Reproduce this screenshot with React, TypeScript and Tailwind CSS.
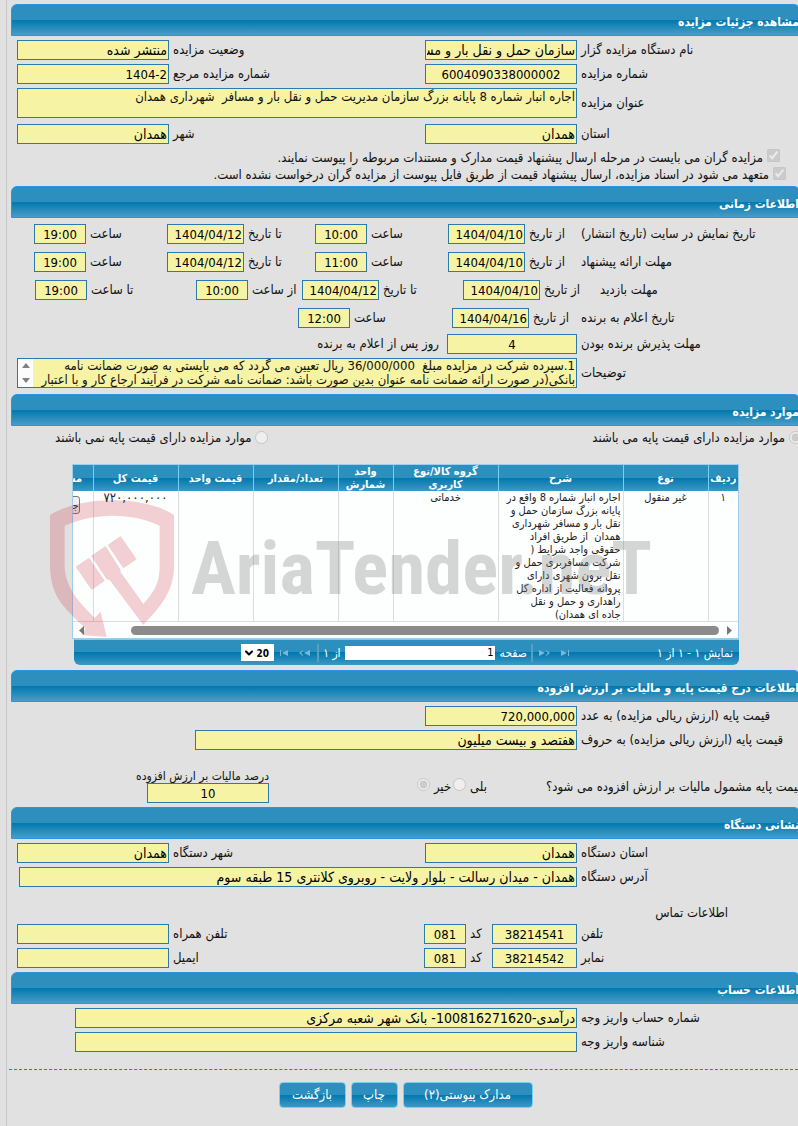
import React from 'react';
import { ChevronDown } from 'lucide-react';

const LABEL = 'shrink-0 whitespace-nowrap text-left pl-1 text-[13px] leading-[20px]';
const FIELD = 'h-5 shrink-0 border border-[#2a7aab] bg-[#f6f3a5] px-px leading-[18px] text-black outline-none';

interface FieldProps {
    label: string;
    value: string;
    labelClass?: string;
    inputClass?: string;
}

const Field: React.FC<FieldProps> = ({ label, value, labelClass = 'w-[221px]', inputClass = 'w-[152px]' }) => {
    const id = React.useId();
    const isNumeric = /^[\d/:,-]*$/.test(value);
    return (
        <>
            <label htmlFor={id} className={`${LABEL} ${labelClass}`}>
                {label}
            </label>
            <input
                id={id}
                readOnly
                value={value}
                className={`${FIELD} ${isNumeric ? 'text-[13px]' : 'text-[14px]'} ${inputClass}`}
            />
        </>
    );
};

const SectionHeader: React.FC<{ title: string }> = ({ title }) => (
    <div className="-mr-[2px] flex h-8 items-center rounded-t-md border border-[#2b93e2] bg-[linear-gradient(to_bottom,#2d8fbe_50%,#0078ae_50%,#4a9dc6)]">
        <h2 className="whitespace-nowrap pt-1 text-[12px] font-bold leading-4 text-white">{title}</h2>
    </div>
);

const Row: React.FC<{ className?: string; children: React.ReactNode }> = ({ className = '', children }) => (
    <div className={`flex items-center ${className}`}>{children}</div>
);

const DATE = 'w-[77px]';
const TIME = 'w-[52px] text-center';

const scheduleRows = [
    {
        title: 'تاریخ نمایش در سایت (تاریخ انتشار)',
        titleClass: 'w-[221px]',
        fields: [
            { label: 'از تاریخ', value: '1404/04/10', labelClass: 'w-[52px]', inputClass: DATE },
            { label: 'ساعت', value: '10:00', labelClass: 'w-[81px]', inputClass: TIME },
            { label: 'تا تاریخ', value: '1404/04/12', labelClass: 'w-[71px]', inputClass: DATE },
            { label: 'ساعت', value: '19:00', labelClass: 'w-[81px]', inputClass: TIME },
        ],
    },
    {
        title: 'مهلت ارائه پیشنهاد',
        titleClass: 'w-[221px]',
        fields: [
            { label: 'از تاریخ', value: '1404/04/10', labelClass: 'w-[52px]', inputClass: DATE },
            { label: 'ساعت', value: '11:00', labelClass: 'w-[81px]', inputClass: TIME },
            { label: 'تا تاریخ', value: '1404/04/12', labelClass: 'w-[71px]', inputClass: DATE },
            { label: 'ساعت', value: '19:00', labelClass: 'w-[81px]', inputClass: TIME },
        ],
    },
    {
        title: 'مهلت بازدید',
        titleClass: 'w-[202px]',
        fields: [
            { label: 'از تاریخ', value: '1404/04/10', labelClass: 'w-[56px]', inputClass: DATE },
            { label: 'تا تاریخ', value: '1404/04/12', labelClass: 'w-[84px]', inputClass: DATE },
            { label: 'از ساعت', value: '10:00', labelClass: 'w-[54px]', inputClass: TIME },
            { label: 'تا ساعت', value: '19:00', labelClass: 'w-[109px]', inputClass: TIME },
        ],
    },
    {
        title: 'تاریخ اعلام به برنده',
        titleClass: 'w-[221px]',
        fields: [
            { label: 'از تاریخ', value: '1404/04/16', labelClass: 'w-[48px]', inputClass: DATE },
            { label: 'ساعت', value: '12:00', labelClass: 'w-[102px]', inputClass: TIME },
        ],
    },
];

const columns = [
    { title: 'ردیف', width: 'w-[30px]' },
    { title: 'نوع', width: 'w-[85px]' },
    { title: 'شرح', width: 'w-[125px]' },
    { title: 'گروه کالا/نوع\nکاربری', width: 'w-[105px]' },
    { title: 'واحد\nشمارش', width: 'w-[55px]' },
    { title: 'تعداد/مقدار', width: 'w-[85px]' },
    { title: 'قیمت واحد', width: 'w-[75px]' },
    { title: 'قیمت کل', width: 'w-[85px]' },
    { title: 'مشاهده', width: 'w-[60px]' },
];

const description = [
    'اجاره انبار شماره 8 واقع در',
    'پایانه بزرگ سازمان حمل و',
    'نقل بار و مسافر شهرداری',
    'همدان  از طریق افراد',
    'حقوقی واجد شرایط (',
    'شرکت مسافربری حمل و',
    'نقل برون شهری دارای',
    'پروانه فعالیت از اداره کل',
    'راهداری و حمل و نقل',
    'جاده ای همدان)',
];

const ItemsTable = () => (
    <div className="overflow-hidden border border-[#9fcdec] bg-[#fdfefe]">
        <table className="w-[705px] table-fixed border-collapse text-[11px] leading-[13px]">
            <thead>
                <tr className="h-[26px] bg-[linear-gradient(to_bottom,#2d8fbe_50%,#0078ae_50%,#3f98c4)] text-white">
                    {columns.map((col) => (
                        <th
                            key={col.title}
                            className={`${col.width} whitespace-pre-line border-l border-[#79cff2] p-0 font-bold`}
                        >
                            {col.title}
                        </th>
                    ))}
                </tr>
            </thead>
            <tbody>
                <tr className="h-[130px] border-b border-[#dddddd] text-center align-top text-[#222222]">
                    <td className="border-l border-[#dddddd] p-0">۱</td>
                    <td className="border-l border-[#dddddd] p-0">غیر منقول</td>
                    <td className="border-l border-[#dddddd] p-0 pr-[2px] text-right">
                        {description.map((line) => (
                            <div key={line} className="whitespace-pre">
                                {line}
                            </div>
                        ))}
                    </td>
                    <td className="border-l border-[#dddddd] p-0">خدماتی</td>
                    <td className="border-l border-[#dddddd] p-0" />
                    <td className="border-l border-[#dddddd] p-0" />
                    <td className="border-l border-[#dddddd] p-0" />
                    <td className="border-l border-[#dddddd] p-0 text-[13px]">۷۲۰,۰۰۰,۰۰۰</td>
                    <td className="p-0 pr-[13px] pt-[5px] text-right">
                        <button className="h-[18px] w-10 rounded-[3px] border border-[#777777] bg-[#f0f0f0] text-right">جزئیات</button>
                    </td>
                </tr>
            </tbody>
        </table>
        <div className="flex h-4 items-center justify-between px-[6px]">
            <svg className="h-[9px] w-[5px]" viewBox="0 0 5 9" fill="#777777">
                <path d="M0 0 5 4.500 0 9z" />
            </svg>
            <div className="ml-[47px] mr-2 h-[9px] flex-1 rounded-full bg-[#8b8b8b]" />
            <svg className="h-[9px] w-[5px]" viewBox="0 0 5 9" fill="#777777">
                <path d="M5 0 0 4.500 5 9z" />
            </svg>
        </div>
    </div>
);

const PagerButton: React.FC<{ label: string; path: string }> = ({ label, path }) => (
    <button aria-label={label} className="shrink-0">
        <svg className="h-[6px] w-3" viewBox="0 0 12 6" fill="#78b8d8">
            <path d={path} />
        </svg>
    </button>
);

const Pager = () => (
    <div className="ml-[2px] flex h-[26px] items-center rounded-b-md border-t border-[#79cff2] bg-[linear-gradient(to_bottom,#2d8fbe_50%,#0078ae_50%,#3f98c4)] pr-[6px] text-[12px] text-white">
        <span className="w-[162px] shrink-0 whitespace-nowrap">نمایش ۱ - ۱ از ۱</span>
        <PagerButton label="صفحه اول" path="M2 0 8 3 2 6zM9 0h1v6H9z" />
        <span className="w-2 shrink-0" />
        <PagerButton label="صفحه قبل" path="M0 0 6 3 0 6zM7 0 11 3 7 6V5L9 3 7 1z" />
        <span className="mr-[6px] h-[18px] w-[2px] shrink-0 bg-[#5b9fc0]" />
        <label htmlFor="page" className="mr-1 shrink-0">
            صفحه
        </label>
        <input
            id="page"
            readOnly
            value="1"
            className="mr-[5px] h-[14px] w-[150px] shrink-0 bg-white px-px text-[11px] leading-[14px] text-black"
        />
        <span className="mr-1 shrink-0">از ۱</span>
        <span className="mr-1 h-[18px] w-[2px] shrink-0 bg-[#5b9fc0]" />
        <span className="w-[7px] shrink-0" />
        <PagerButton label="صفحه بعد" path="M12 0 6 3 12 6zM5 0 1 3 5 6V5L3 3 5 1z" />
        <span className="w-2 shrink-0" />
        <PagerButton label="صفحه آخر" path="M10 0 4 3 10 6zM2 0h1v6H2z" />
        <div className="relative mr-1 h-[17px] w-[33px] shrink-0 bg-white text-black">
            <select aria-label="تعداد در صفحه" className="h-full w-full appearance-none pr-[5px] text-[10px] font-bold">
                <option>20</option>
            </select>
            <ChevronDown className="pointer-events-none absolute left-[2px] top-[3px] h-3 w-3" strokeWidth={4} />
        </div>
    </div>
);

const Watermark = () => (
    <div dir="ltr" aria-hidden="true" className="pointer-events-none absolute left-[39px] top-[74px] flex">
        <svg className="h-[138px] w-[125px] shrink-0" viewBox="150 330 375 414" fill="rgba(200,40,55,0.22)">
            <path
                fillRule="evenodd"
                d="M150 375 C240 318 430 315 522 375 V535 C518 615 475 655 430 705 L329 570 320 568 273 498 317 468 362 540 361 545 430 642 C460 605 478 585 479 530 V407 C400 367 280 367 194 407 V535 C200 595 230 630 284 684 L302 665 320 741 246 735 257 716 C190 650 155 625 150 535z"
            />
            <path d="M227 530 267 503 314 572 275 600zM323 465 362 438 410 508 370 535z" />
        </svg>
        <span className="whitespace-nowrap pl-4 pt-5 font-['Liberation_Sans_Narrow','Roboto_Condensed',sans-serif] text-[75px] font-bold leading-[96px] text-[#777777]/30">
            AriaTender.neT
        </span>
    </div>
);

const ActionButton: React.FC<{ label: string; width: string }> = ({ label, width }) => (
    <button
        className={`${width} h-[26px] whitespace-nowrap rounded-[4px] border border-[#79cff2] bg-[linear-gradient(to_bottom,#2d8fbe_50%,#0078ae_50%,#3f98c4)] text-[13px] text-white`}
    >
        {label}
    </button>
);

export default function App() {
    return (
        <div
            dir="rtl"
            className="min-h-screen overflow-hidden bg-[#e1e1e1] pl-[6px] font-['DejaVu_Sans_Condensed','DejaVu_Sans',sans-serif] text-[13px] text-[#111111]"
        >
            <main className="min-h-screen border-l border-[#c9c9c9] pb-[18px] pl-1 pt-1">
                <SectionHeader title="مشاهده جزئیات مزایده" />
                <section className="flex flex-col gap-1 pl-[6px] pt-1">
                    <Row>
                        <Field label="نام دستگاه مزایده گزار" value="سازمان حمل و نقل بار و مسافر شهرداری همدان" />
                        <Field label="وضعیت مزایده" value="منتشر شده" labelClass="flex-1" />
                    </Row>
                    <Row>
                        <Field label="شماره مزایده" value="6004090338000002" inputClass="w-[152px] text-center" />
                        <Field label="شماره مزایده مرجع" value="1404-2" labelClass="flex-1" />
                    </Row>
                    <Row>
                        <label htmlFor="subject" className={`${LABEL} w-[221px]`}>
                            عنوان مزایده
                        </label>
                        <textarea
                            id="subject"
                            readOnly
                            value="اجاره انبار شماره 8 پایانه بزرگ سازمان مدیریت حمل و نقل بار و مسافر  شهرداری همدان"
                            className="block h-[30px] min-w-0 flex-1 resize-none overflow-hidden border border-[#2a7aab] bg-[#f6f3a5] px-px text-[13px] leading-[16px]"
                        />
                    </Row>
                    <Row className="mt-[2px]">
                        <Field label="استان" value="همدان" />
                        <Field label="شهر" value="همدان" labelClass="flex-1" />
                    </Row>
                    <div className="pb-[3px]">
                        <label className="mr-[18px] flex h-[19px] items-center gap-1 whitespace-nowrap">
                            <input type="checkbox" checked disabled className="-mt-1" />
                            مزایده گران می بایست در مرحله ارسال پیشنهاد قیمت مدارک و مستندات مربوطه را پیوست نمایند.
                        </label>
                        <label className="mr-3 flex h-[16px] items-center gap-1 whitespace-nowrap">
                            <input type="checkbox" checked disabled className="-mt-1" />
                            متعهد می شود در اسناد مزایده، ارسال پیشنهاد قیمت از طریق فایل پیوست از مزایده گران درخواست نشده است.
                        </label>
                    </div>
                </section>

                <SectionHeader title="اطلاعات زمانی" />
                <section className="pb-[6px] pl-[6px] pt-[6px]">
                    <div className="flex flex-col gap-2">
                        {scheduleRows.map((row) => (
                            <Row key={row.title}>
                                <span className={`${LABEL} ${row.titleClass}`}>{row.title}</span>
                                {row.fields.map((field, idx) => (
                                    <Field key={idx} {...field} />
                                ))}
                            </Row>
                        ))}
                    </div>
                    <Row className="mt-[6px]">
                        <Field label="مهلت پذیرش برنده بودن" value="4" inputClass="w-[130px] text-center" />
                        <span className="mr-2">روز پس از اعلام به برنده</span>
                    </Row>
                    <Row className="mt-1">
                        <label htmlFor="notes" className={`${LABEL} w-[221px]`}>
                            توضیحات
                        </label>
                        <div className="flex h-[30px] min-w-0 flex-1 border border-[#2a7aab] bg-[#f6f3a5]">
                            <textarea
                                id="notes"
                                readOnly
                                value={'1.سپرده شرکت در مزایده مبلغ  36/000/000 ریال تعیین می گردد که می بایستی به صورت ضمانت نامه\nبانکی(در صورت ارائه ضمانت نامه عنوان بدین صورت باشد: ضمانت نامه شرکت در فرآیند ارجاع کار و با اعتبار'}
                                className="block h-full min-w-0 flex-1 resize-none overflow-hidden whitespace-pre px-px text-[13px] leading-[14px]"
                            />
                            <div className="flex w-[15px] flex-col items-center justify-between bg-[#fcfcfc] py-1">
                                <svg className="h-[5px] w-2" viewBox="0 0 8 5" fill="#808080">
                                    <path d="M0 5 4 0 8 5z" />
                                </svg>
                                <svg className="h-[5px] w-2" viewBox="0 0 8 5" fill="#808080">
                                    <path d="M0 0 4 5 8 0z" />
                                </svg>
                            </div>
                        </div>
                    </Row>
                </section>

                <SectionHeader title="موارد مزایده" />
                <section className="relative pb-[5px]">
                    <div className="flex h-[38px] items-start justify-between pl-[44px] pt-[2px]">
                        <label className="-mr-1 flex items-center gap-1">
                            <input type="radio" name="base" checked disabled />
                            موارد مزایده دارای قیمت پایه می باشند
                        </label>
                        <label className="flex items-center gap-1">
                            <input type="radio" name="nobase" disabled />
                            موارد مزایده دارای قیمت پایه نمی باشند
                        </label>
                    </div>
                    <div className="ml-[61px] mr-[59px]">
                        <ItemsTable />
                        <Pager />
                    </div>
                    <Watermark />
                </section>

                <SectionHeader title="اطلاعات درج قیمت پایه و مالیات بر ارزش افزوده" />
                <section className="flex flex-col gap-1 py-1 pl-[6px]">
                    <Row>
                        <Field label="قیمت پایه (ارزش ریالی مزایده) به عدد" value="720,000,000" />
                    </Row>
                    <Row>
                        <Field
                            label="قیمت پایه (ارزش ریالی مزایده) به حروف"
                            value="هفتصد و بیست میلیون"
                            inputClass="flex-1 ml-[178px]"
                        />
                    </Row>
                    <Row className="mt-4 h-[33px]">
                        <span className="-mr-[8px] w-[260px] shrink-0 whitespace-nowrap text-left">
                            قیمت پایه مشمول مالیات بر ارزش افزوده می شود؟
                        </span>
                        <label className="mr-[59px] flex items-center gap-1">
                            بلی
                            <input type="radio" name="vat-yes" disabled className="-mt-1" />
                        </label>
                        <label className="mr-[2px] flex items-center gap-1">
                            خیر
                            <input type="radio" name="vat-no" checked disabled className="-mt-1" />
                        </label>
                        <div className="ml-[130px] mr-auto flex w-[122px] flex-col">
                            <label htmlFor="vat" className="whitespace-nowrap text-[12px] leading-[13px]">
                                درصد مالیات بر ارزش افزوده
                            </label>
                            <input id="vat" readOnly value="10" className={`${FIELD} text-center text-[13px]`} />
                        </div>
                    </Row>
                </section>

                <SectionHeader title="نشانی دستگاه" />
                <section className="flex flex-col gap-1 py-1 pl-[6px]">
                    <Row>
                        <Field label="استان دستگاه" value="همدان" />
                        <Field label="شهر دستگاه" value="همدان" labelClass="flex-1" />
                    </Row>
                    <Row>
                        <Field
                            label="آدرس دستگاه"
                            value="همدان - میدان رسالت - بلوار ولایت - روبروی کلانتری 15 طبقه سوم"
                            inputClass="flex-1 ml-[2px]"
                        />
                    </Row>
                    <h3 className="mr-[70px] mt-[14px] leading-[15px]">اطلاعات تماس</h3>
                    <Row>
                        <Field label="تلفن" value="38214541" inputClass="w-[85px] text-center" />
                        <Field label="کد" value="081" labelClass="w-[26px]" inputClass="w-[42px] text-center" />
                        <Field label="تلفن همراه" value="" labelClass="flex-1" />
                    </Row>
                    <Row>
                        <Field label="نمابر" value="38214542" inputClass="w-[85px] text-center" />
                        <Field label="کد" value="081" labelClass="w-[26px]" inputClass="w-[42px] text-center" />
                        <Field label="ایمیل" value="" labelClass="flex-1" />
                    </Row>
                </section>

                <SectionHeader title="اطلاعات حساب" />
                <section className="flex flex-col gap-1 pl-[6px] pt-1">
                    <Row>
                        <Field
                            label="شماره حساب واریز وجه"
                            value="درآمدی-100816271620- بانک شهر شعبه مرکزی"
                            inputClass="flex-1 ml-[58px]"
                        />
                    </Row>
                    <Row>
                        <Field label="شناسه واریز وجه" value="" inputClass="flex-1 ml-[58px]" />
                    </Row>
                </section>

                <div className="-ml-[2px] mt-[17px] flex justify-center gap-[5px] border-t border-dashed border-[#2a7fa5] pl-1 pt-3">
                    <ActionButton label="مدارک پیوستی(۲)" width="w-[130px]" />
                    <ActionButton label="چاپ" width="w-[47px]" />
                    <ActionButton label="بازگشت" width="w-[67px]" />
                </div>
            </main>
        </div>
    );
}
